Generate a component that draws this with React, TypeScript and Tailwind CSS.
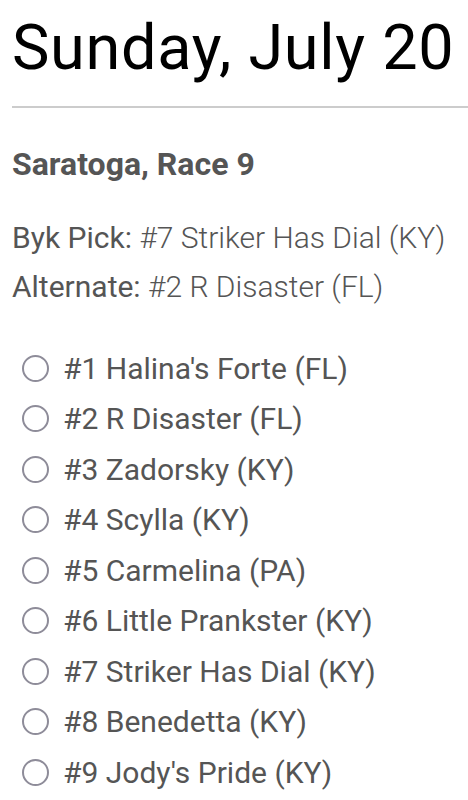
import React from "react";

const horses = [
  "#1 Halina's Forte (FL)",
  "#2 R Disaster (FL)",
  "#3 Zadorsky (KY)",
  "#4 Scylla (KY)",
  "#5 Carmelina (PA)",
  "#6 Little Prankster (KY)",
  "#7 Striker Has Dial (KY)",
  "#8 Benedetta (KY)",
  "#9 Jody's Pride (KY)",
];

export default function App() {
  return (
    <div className="bg-white pl-3 h-[800px] overflow-hidden" style={{ fontFamily: "Roboto, sans-serif" }}>
      <h1 className="text-[63px] leading-[70px] pt-[13px] text-black font-normal tracking-[0.7px]">Sunday, July 20</h1>
      <div className="mt-[23px] h-[2px] bg-[#cccccc]" />
      <h2 className="mt-[38px] text-[32px] leading-[36px] font-bold text-[#555555]">Saratoga, Race 9</h2>
      <div className="mt-[31px] text-[30px] leading-[49px] text-[#555555]">
        <p><span className="font-normal">Byk Pick:</span> <span className="font-light">#7 Striker Has Dial (KY)</span></p>
        <p><span className="font-normal">Alternate:</span> <span className="font-light">#2 R Disaster (FL)</span></p>
      </div>
      <ul className="mt-[32px]">
        {horses.map((h) => (
          <li key={h} className="flex items-center h-[50.5px]">
            <span className="ml-[10px] w-[27px] h-[27px] rounded-full border-2 border-[#8e8c99] shrink-0" />
            <span className="ml-[14px] text-[30px] text-[#555555]">{h}</span>
          </li>
        ))}
      </ul>
    </div>
  );
}
